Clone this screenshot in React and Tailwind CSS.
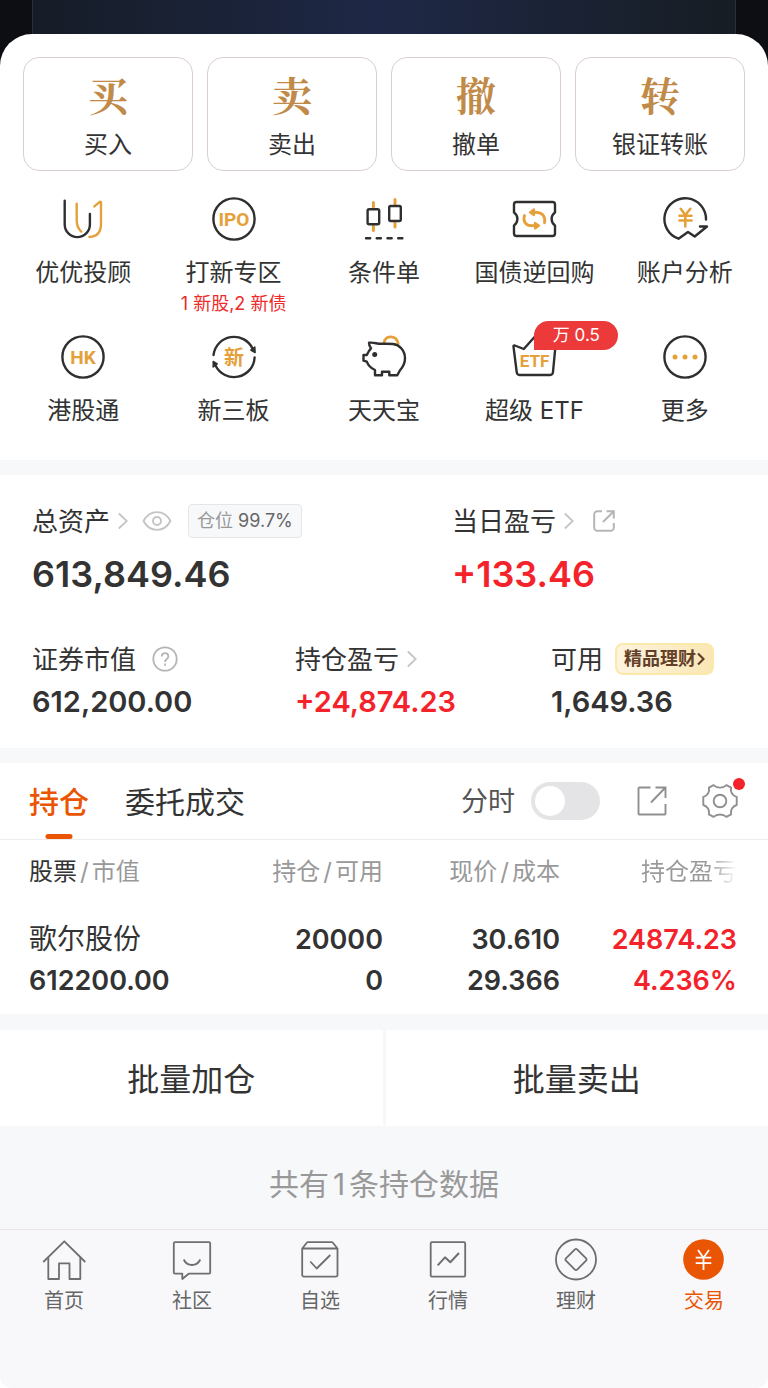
import { useState } from "react";

const DARK = "#2f2f2f";
const GOLD = "#e5a03a";

const quickActions = [
  { glyph: "买", label: "买入" },
  { glyph: "卖", label: "卖出" },
  { glyph: "撤", label: "撤单" },
  { glyph: "转", label: "银证转账" },
];

function IconFrame({ children }) {
  return (
    <svg
      viewBox="0 0 48 48"
      className="w-12 h-12"
      fill="none"
      stroke={DARK}
      strokeWidth="2.4"
      strokeLinecap="round"
      strokeLinejoin="round"
      aria-hidden="true"
    >
      {children}
    </svg>
  );
}

function IconText({ x = 24, y, size, children }) {
  return (
    <text
      x={x}
      y={y}
      fontSize={size}
      textAnchor="middle"
      fill={GOLD}
      stroke="none"
      className="font-bold font-[Roboto,'Noto_Sans_CJK_SC',sans-serif]"
    >
      {children}
    </text>
  );
}

const AdvisorIcon = () => (
  <IconFrame>
    <path d="M5.7 5.8V29.5a12.6 12.6 0 0 0 25.2 0V19" />
    <g stroke={GOLD}>
      <path d="M17.7 8.8V25c0 5 1.2 8.6 4.6 11.6" />
      <path d="M35.3 11.4l5.2-4.3c.7-.6 1.5-.2 1.5.8V29c0 8-4.2 12.6-11.6 13" />
    </g>
  </IconFrame>
);

const IpoIcon = () => (
  <IconFrame>
    <circle cx="24" cy="24" r="20.6" />
    <IconText y="31" size="19">IPO</IconText>
  </IconFrame>
);

const ConditionIcon = () => (
  <IconFrame>
    <g stroke={GOLD} strokeWidth="3">
      <path d="M13.4 7.5V12M13.4 31V35.5M35 4.6V9M35 28V32" />
    </g>
    <rect x="7.6" y="14.3" width="11.6" height="15" rx="1.5" />
    <rect x="29.2" y="11" width="11.6" height="15" rx="1.5" />
    <path d="M6 43.3h4.2M16.7 43.3h4.2M27.5 43.3h4.2M38.2 43.3h4.2" />
  </IconFrame>
);

const RepoIcon = () => (
  <IconFrame>
    <path d="M6.5 7h36a2.5 2.5 0 0 1 2.5 2.5v8c-4.500 3-4.500 10 0 13v8a2.500 2.500 0 0 1-2.500 2.500h-36a2.500 2.500 0 0 1-2.500-2.500v-8c4.500-3 4.500-10 0-13v-8a2.500 2.500 0 0 1 2.500-2.500z" />
    <g stroke={GOLD} strokeWidth="2.8">
      <path d="M24 17.3h2.500c6.200 0 9.300 5 8 10.500" />
      <path d="M14.500 20.500c-2 6 1.500 10.200 7 10.200H25" />
      <path d="M20 17.300l4-2.800v5.600zM29 30.700l-4-2.800v5.600z" fill={GOLD} strokeWidth="2.2" />
    </g>
  </IconFrame>
);

const AnalysisIcon = () => (
  <IconFrame>
    <path d="M45 24.500A20.800 20.800 0 1 0 17.500 43.700L27 37l6.700 4.500L46 31.500h-7" />
    <path
      d="M19.700 13.800l4.600 6.200 5-6.200M24.300 20V31.500M18.500 20.800H30.500M18.500 25.500H30.500"
      stroke={GOLD}
      strokeWidth="2.6"
    />
  </IconFrame>
);

const HkIcon = () => (
  <IconFrame>
    <circle cx="24" cy="24" r="20.6" />
    <IconText y="31" size="19">HK</IconText>
  </IconFrame>
);

const NewBoardIcon = () => (
  <IconFrame>
    <path d="M3.500 22A20.600 20.600 0 0 1 42.500 15.500M44.600 24.500A20.600 20.600 0 0 1 5.500 32.500" />
    <path d="M40.800 17l4-3 .3 5.500zM7.200 31l-4 3v-5.500z" fill={DARK} strokeWidth="1.5" />
    <IconText y="31.5" size="20">新</IconText>
  </IconFrame>
);

const PiggyIcon = () => (
  <IconFrame>
    <path d="M24.200 9c1.500-7 12.500-7.500 14 1.800" stroke={GOLD} strokeWidth="2.8" />
    <path d="M20.500 10.800c-3.500 0-7.500-1.800-11.500-1 0 2.500.7 4 2 5.500-2 2-3 4-4.200 6.700H3.500v5.700l3.300 1c1.500 4 4.500 6.800 8.200 8.300v5.200h7V38.800h7.300v3.400H37.300l2.700-5c3-3.200 5-7 5-11.900 0-8-5.500-13.500-12-14.300-4-.4-8-.2-12.500-.2z" fill="white" />
    <circle cx="14.700" cy="21.500" r="2.5" fill={DARK} stroke="none" />
  </IconFrame>
);

const EtfIcon = () => (
  <IconFrame>
    <path d="M4.800 12.500l9 3.500L24.500 4 35 16l9-3.500c1-.3 1.500.2 1.400 1.200L43 39c-.2 2-1 3-2.800 3H9.500c-1.800 0-2.600-1-2.800-3L3.500 13.700c-.1-1 .3-1.500 1.300-1.200z" />
    <IconText x={24.5} y="34" size="17">ETF</IconText>
  </IconFrame>
);

const MoreIcon = () => (
  <IconFrame>
    <circle cx="24" cy="24" r="20.6" />
    <g fill={GOLD} stroke="none">
      <circle cx="14" cy="24" r="2.5" />
      <circle cx="24" cy="24" r="2.5" />
      <circle cx="34" cy="24" r="2.5" />
    </g>
  </IconFrame>
);

const services = [
  { label: "优优投顾", icon: AdvisorIcon },
  { label: "打新专区", icon: IpoIcon, note: "1 新股,2 新债" },
  { label: "条件单", icon: ConditionIcon },
  { label: "国债逆回购", icon: RepoIcon },
  { label: "账户分析", icon: AnalysisIcon },
  { label: "港股通", icon: HkIcon },
  { label: "新三板", icon: NewBoardIcon },
  { label: "天天宝", icon: PiggyIcon },
  { label: "超级 ETF", icon: EtfIcon, badge: "万 0.5" },
  { label: "更多", icon: MoreIcon },
];

function Chevron() {
  return (
    <svg viewBox="0 0 10 18" className="w-[10px] h-[18px]" fill="none" stroke="#c4c4c4" strokeWidth="1.8" aria-hidden="true">
      <path d="M.8 1.500L8.800 9l-8 7.500" />
    </svg>
  );
}

function EyeIcon() {
  return (
    <svg viewBox="0 0 30 22" className="w-[30px] h-[22px]" fill="none" stroke="#c4c4c4" strokeWidth="1.9" aria-hidden="true">
      <path d="M1.500 11C8-.8 22-.8 28.500 11 22 22.800 8 22.800 1.500 11z" strokeLinejoin="round" />
      <circle cx="15" cy="11" r="4" />
    </svg>
  );
}

function ShareIcon() {
  return (
    <svg viewBox="0 0 24 24" className="w-6 h-6" fill="none" stroke="#b5b5b5" strokeWidth="2" aria-hidden="true">
      <path d="M10 2.200H5.500a3.300 3.300 0 0 0-3.300 3.300v13a3.300 3.300 0 0 0 3.300 3.300h13a3.300 3.300 0 0 0 3.300-3.300V14M11 13L21.500 2.500M14.500 2.200h7.300v7.300" />
    </svg>
  );
}

function HelpIcon() {
  return (
    <svg viewBox="0 0 26 26" className="w-[26px] h-[26px]" fill="none" stroke="#b5b5b5" strokeWidth="1.8" aria-hidden="true">
      <circle cx="13" cy="13" r="11.700" />
      <path d="M9.800 10.500c0-4.500 6.600-4.500 6.600 0 0 2.500-3.400 2.500-3.400 5.500M13 17.500v2.200" />
    </svg>
  );
}

function ExportIcon() {
  return (
    <svg viewBox="0 0 32 32" className="w-8 h-8" fill="none" stroke="#8f8f8f" strokeWidth="1.9" aria-hidden="true">
      <path d="M14.500 2.500H3.500a1 1 0 0 0-1 1v25a1 1 0 0 0 1 1h25a1 1 0 0 0 1-1V19M15 17.500L29 3M19.500 2.500h10v10.500" />
    </svg>
  );
}

function GearIcon() {
  return (
    <svg viewBox="0 0 36 36" className="w-9 h-9" fill="none" stroke="#8f8f8f" strokeWidth="1.9" strokeLinejoin="round" aria-hidden="true">
      <path d="M11.600 2.100c3.500 3.300 9.300 3.300 12.800 0l4.700 2.600c-1 4.300 1.500 8.100 5.600 9.300v8c-4.100 1.200-6.600 5-5.600 9.300l-4.700 2.600c-3.500-3.300-9.300-3.300-12.800 0l-4.700-2.600c1-4.300-1.500-8.100-5.600-9.300v-8c4.100-1.200 6.600-5 5.600-9.300z" />
      <circle cx="18" cy="18" r="6.3" />
    </svg>
  );
}

function NavFrame({ children }) {
  return (
    <svg viewBox="0 0 44 44" className="w-11 h-11" fill="none" stroke="#6e6e6e" strokeWidth="1.8" strokeLinejoin="round" aria-hidden="true">
      {children}
    </svg>
  );
}

const navItems = [
  {
    label: "首页",
    icon: (
      <>
        <path d="M1.300 24L22.300 3.300 43.300 24" />
        <path d="M6.300 19.500V41H17V25.300H27.500V41H38.300V19.500" />
      </>
    ),
  },
  {
    label: "社区",
    icon: (
      <>
        <path d="M5 4.200H39a1.200 1.200 0 0 1 1.200 1.200V34.500a1.200 1.200 0 0 1-1.200 1.200H18.700L12.300 41V35.700H5a1.200 1.200 0 0 1-1.200-1.200V5.400A1.200 1.200 0 0 1 5 4.200z" />
        <path d="M13.700 21.500c3.500 7.300 13.100 7.300 16.600 0" />
      </>
    ),
  },
  {
    label: "自选",
    icon: (
      <>
        <path d="M4.200 10.500V37a1.700 1.700 0 0 0 1.700 1.700H37.800a1.700 1.700 0 0 0 1.700-1.700V10.500L34.700 4.500a1 1 0 0 0-.8-.4H9.800a1 1 0 0 0-.8.4zM4.200 10.500H39.500" />
        <path d="M12.300 23.500l6.400 7L32.300 17" />
      </>
    ),
  },
  {
    label: "行情",
    icon: (
      <>
        <rect x="4.700" y="4.200" width="34.500" height="34.500" rx="1.2" />
        <path d="M11.700 27.300L19 19.300l5.300 5L33 15" strokeWidth="2" />
      </>
    ),
  },
  {
    label: "理财",
    icon: (
      <>
        <circle cx="22" cy="21.500" r="20" />
        <path d="M20.900 11.300a1.500 1.500 0 0 1 2.200 0l9 9.100a1.500 1.500 0 0 1 0 2.200l-9 9.100a1.500 1.500 0 0 1-2.200 0l-9-9.100a1.500 1.500 0 0 1 0-2.200z" />
      </>
    ),
  },
  {
    label: "交易",
    active: true,
    icon: (
      <>
        <circle cx="21.500" cy="21.500" r="20.300" fill="#ea5504" stroke="none" />
        <path d="M16 12l5.500 7.700L27 12M21.500 19.700V32M13.700 19.700H29.300M13.700 25.200H29.300" stroke="white" />
      </>
    ),
  },
];

const Slash = () => <span className="mx-[3px]">/</span>;

export default function App() {
  const [tab, setTab] = useState("持仓");
  const [minute, setMinute] = useState(false);

  return (
    <div className="min-h-screen rounded-b-xl bg-[#f7f8fa] text-[#333] font-[Inter,'Noto_Sans_CJK_SC',sans-serif]">
      <div className="bg-[#0d0d14] px-8">
        <div className="h-[34px] bg-linear-to-r from-[#161c27] via-[#1e2846] to-[#171d24] border-x border-[#2a303a]" />
      </div>

      <div className="bg-[#0d0d14]">
        <section className="bg-white rounded-t-[32px] pt-[23px] pb-[33px]">
          <div className="grid grid-cols-4 gap-[14px] px-[23px]">
            {quickActions.map((item) => (
              <button
                key={item.label}
                className="flex flex-col items-center rounded-2xl border border-[#d9cfcc] pt-[14px] pb-[9px]"
              >
                <span className="text-[40px] leading-[44px] font-bold text-[#c08a48] font-['Noto_Serif_CJK_SC','Noto_Serif_SC','Noto_Sans_CJK_SC',serif]">
                  {item.glyph}
                </span>
                <span className="mt-[13px] text-2xl leading-8">{item.label}</span>
              </button>
            ))}
          </div>

          <div className="grid grid-cols-5 gap-y-[17px] px-2 mt-6">
            {services.map((item) => {
              const Icon = item.icon;
              return (
                <button key={item.label} className="flex flex-col items-center">
                  <span className="relative">
                    <Icon />
                    {item.badge && (
                      <span className="absolute left-6 -top-3 w-[84px] rounded-full rounded-bl-none bg-[#ec3a3a] text-white text-[17px] leading-[29px] text-center">
                        {item.badge}
                      </span>
                    )}
                  </span>
                  <span className="mt-[14px] text-2xl leading-8 whitespace-nowrap">{item.label}</span>
                  {item.note && (
                    <span className="mt-[3px] text-lg leading-6 text-[#ee2a2a] whitespace-nowrap">{item.note}</span>
                  )}
                </button>
              );
            })}
          </div>
        </section>
      </div>

      {/* Assets */}
      <section className="mt-[15px] bg-white px-8 pt-7 pb-7">
        <div className="grid grid-cols-[420fr_284fr]">
          <div>
            <div className="flex items-center h-9">
              <span className="text-[26px]">总资产</span>
              <span className="ml-2"><Chevron /></span>
              <button className="ml-[14px]" aria-label="隐藏金额"><EyeIcon /></button>
              <span className="ml-4 px-2 rounded border border-[#e6e6e8] bg-[#f7f8fa] text-lg leading-8 text-[#666]">
                <span className="text-[#999]">仓位</span> 99.7%
              </span>
            </div>
            <div className="mt-[13px] text-4xl leading-[44px] font-semibold">613,849.46</div>
          </div>
          <div>
            <div className="flex items-center h-9">
              <span className="text-[26px]">当日盈亏</span>
              <span className="ml-2"><Chevron /></span>
              <button className="ml-[18px]" aria-label="分享盈亏"><ShareIcon /></button>
            </div>
            <div className="mt-[13px] text-4xl leading-[44px] font-semibold text-[#f4222a]">+133.46</div>
          </div>
        </div>

        <div className="grid grid-cols-[263fr_256fr_185fr] mt-[45px]">
          <div>
            <div className="flex items-center h-9">
              <span className="text-[26px]">证券市值</span>
              <button className="ml-4" aria-label="说明"><HelpIcon /></button>
            </div>
            <div className="mt-[7px] text-[29px] leading-9 font-semibold">612,200.00</div>
          </div>
          <div>
            <div className="flex items-center h-9">
              <span className="text-[26px]">持仓盈亏</span>
              <span className="ml-2"><Chevron /></span>
            </div>
            <div className="mt-[7px] text-[29px] leading-9 font-semibold text-[#f4222a]">+24,874.23</div>
          </div>
          <div>
            <div className="flex items-center h-9">
              <span className="text-[26px] whitespace-nowrap">可用</span>
              <a
                href="#wealth"
                className="ml-3 flex items-center gap-px px-[7px] rounded-lg border-2 border-[#fae9a8] bg-linear-to-r from-[#fdf3df] to-[#fbe7b4] text-lg leading-7 font-bold text-[#63402a] whitespace-nowrap"
              >
                精品理财
                <svg viewBox="0 0 8 14" className="w-2 h-[14px]" fill="none" stroke="#63402a" strokeWidth="2.2" aria-hidden="true">
                  <path d="M1 1.500L6.500 7 1 12.500" />
                </svg>
              </a>
            </div>
            <div className="mt-[7px] text-[29px] leading-9 font-semibold">1,649.36</div>
          </div>
        </div>
      </section>

      {/* Positions */}
      <section className="mt-[15px] bg-white">
        <div className="flex items-center justify-between h-[77px] border-b border-[#ececee] pl-[29px] pr-[30px]">
          <div className="flex self-stretch gap-9">
            {["持仓", "委托成交"].map((name) => (
              <button
                key={name}
                onClick={() => setTab(name)}
                className={`relative pt-[2px] text-[30px] ${tab === name ? "text-[#ea5504] font-medium" : ""}`}
              >
                {name}
                {tab === name && (
                  <span className="absolute bottom-0 left-1/2 -translate-x-1/2 w-[27px] h-[5px] rounded-full bg-[#ea5504]" />
                )}
              </button>
            ))}
          </div>

          <div className="flex items-center">
            <label className="flex items-center gap-4 text-[27px] text-[#555]">
              <span className="pt-[2px]">分时</span>
              <input
                type="checkbox"
                role="switch"
                checked={minute}
                onChange={(e) => setMinute(e.target.checked)}
                className="appearance-none w-[69px] h-[38px] p-1 rounded-full bg-[#e4e4e6] checked:bg-[#ea5504] before:block before:w-[30px] before:h-[30px] before:rounded-full before:bg-white checked:before:ml-auto"
              />
            </label>
            <button className="ml-9" aria-label="导出"><ExportIcon /></button>
            <button className="relative ml-[34px]" aria-label="设置">
              <GearIcon />
              <span className="absolute -top-[5px] -right-[7px] w-3 h-3 rounded-full bg-[#f4222a]" />
            </button>
          </div>
        </div>

        <div className="pl-[29px] pr-[31px] pb-[13px]">
          <table className="w-full table-fixed text-right text-[27px] leading-[41px] font-semibold">
            <thead>
              <tr className="h-[62px] text-2xl text-[#999]">
                <th className="w-1/4 pt-[2px] text-left font-normal whitespace-nowrap">
                  <span className="text-[#333]">股票</span><Slash />市值
                </th>
                <th className="w-1/4 pt-[2px] font-normal">持仓<Slash />可用</th>
                <th className="w-1/4 pt-[2px] font-normal">现价<Slash />成本</th>
                <th className="w-1/4 pt-[2px] font-normal">
                  <span className="bg-linear-to-r from-[#999] from-70% to-white bg-clip-text text-transparent">持仓盈亏</span>
                </th>
              </tr>
            </thead>
            <tbody>
              <tr>
                <td className="pt-[17px] text-left">
                  <div className="text-[28px] font-normal">歌尔股份</div>
                  <div>612200.00</div>
                </td>
                <td className="pt-[17px]">
                  <div>20000</div>
                  <div>0</div>
                </td>
                <td className="pt-[17px]">
                  <div>30.610</div>
                  <div>29.366</div>
                </td>
                <td className="pt-[17px] text-[#f4222a]">
                  <div>24874.23</div>
                  <div>4.236%</div>
                </td>
              </tr>
            </tbody>
          </table>
        </div>
      </section>

      <div className="grid grid-cols-2 gap-[3px] mt-4">
        <button className="bg-white h-24 pt-1 text-[32px]">批量加仓</button>
        <button className="bg-white h-24 pt-1 text-[32px]">批量卖出</button>
      </div>

      <p className="pt-[38px] pb-[25px] text-center text-[30px] leading-10 text-[#999]">
        共有<span className="mx-1">1</span>条持仓数据
      </p>

      <nav className="grid grid-cols-6 rounded-b-xl border-t border-[#e9e2e6] pt-2 pb-[75px] bg-[#f8f8fb]">
        {navItems.map((item) => (
          <a
            key={item.label}
            href="#nav"
            aria-current={item.active ? "page" : undefined}
            className={`flex flex-col items-center text-xl leading-6 ${item.active ? "text-[#ea5504]" : "text-[#666]"}`}
          >
            <NavFrame>{item.icon}</NavFrame>
            <span className="mt-[7px]">{item.label}</span>
          </a>
        ))}
      </nav>
    </div>
  );
}
